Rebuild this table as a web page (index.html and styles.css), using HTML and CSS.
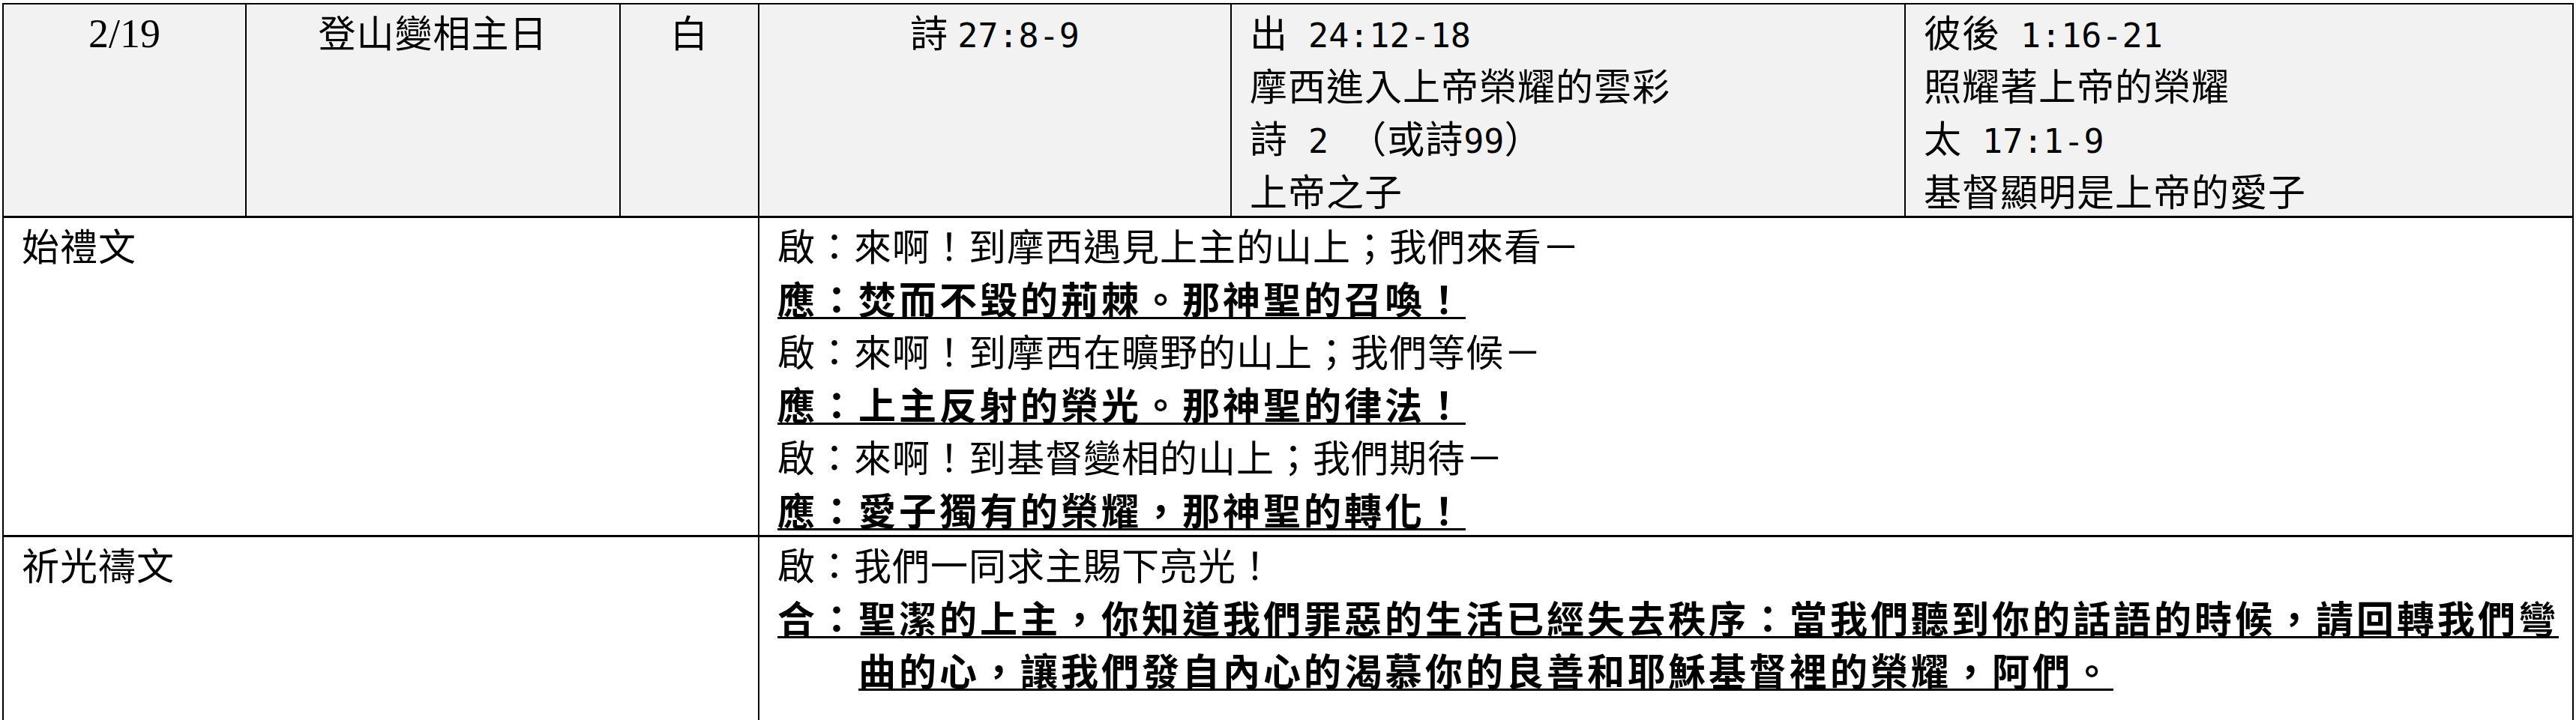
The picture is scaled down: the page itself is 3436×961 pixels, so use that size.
FILE: index.html
```html
<!DOCTYPE html>
<html lang="zh-Hant">
<head>
<meta charset="utf-8">
<title>登山變相主日</title>
<link rel="stylesheet" href="styles.css">
</head>
<body>
<div class="sheet">
  <div class="cell head center"><span class="date">2/19</span></div>
  <div class="cell head center">登山變相主日</div>
  <div class="cell head center">白</div>
  <div class="cell head center">詩 <span class="n">27:8-9</span></div>
  <div class="cell head pad">
    <p>出<span class="n"> 24:12-18</span></p>
    <p>摩西進入上帝榮耀的雲彩</p>
    <p>詩<span class="n"> 2 </span>（或詩<span class="n">99</span>）</p>
    <p>上帝之子</p>
  </div>
  <div class="cell head pad">
    <p>彼後<span class="n"> 1:16-21</span></p>
    <p>照耀著上帝的榮耀</p>
    <p>太<span class="n"> 17:1-9</span></p>
    <p>基督顯明是上帝的愛子</p>
  </div>

  <div class="cell body1 span3 pad">始禮文</div>
  <div class="cell body1 span3 pad">
    <p>啟：來啊！到摩西遇見上主的山上；我們來看－</p>
    <p><span class="b">應：焚而不毀的荊棘。那神聖的召喚！</span></p>
    <p>啟：來啊！到摩西在曠野的山上；我們等候－</p>
    <p><span class="b">應：上主反射的榮光。那神聖的律法！</span></p>
    <p>啟：來啊！到基督變相的山上；我們期待－</p>
    <p><span class="b">應：愛子獨有的榮耀，那神聖的轉化！</span></p>
  </div>

  <div class="cell body2 span3 pad">祈光禱文</div>
  <div class="cell body2 span3 pad">
    <p>啟：我們一同求主賜下亮光！</p>
    <p class="hang"><span class="b">合：聖潔的上主，你知道我們罪惡的生活已經失去秩序：當我們聽到你的話語的時候，請回轉我們彎曲的心，讓我們發自內心的渴慕你的良善和耶穌基督裡的榮耀，阿們。</span></p>
  </div>
</div>
</body>
</html>
```
FILE: styles.css
```css
html, body {
  margin: 0;
  padding: 0;
  background: #ffffff;
}

body {
  font-family: "Noto Sans CJK TC", "Noto Sans CJK SC", sans-serif;
  color: #000000;
}

.sheet {
  display: grid;
  grid-template-columns: 324px 499px 185px 630px 899px 891px;
  width: 3430px;
  box-sizing: border-box;
  margin: 4px 0 0 3px;
  border-left: 2px solid #000000;
  border-top: 2px solid #000000;
  font-size: 50px;
  line-height: 70.5px;
  letter-spacing: 1px;
  text-spacing-trim: space-all;
}

.sheet p {
  margin: 0;
  height: 70.5px;
}

.sheet p.hang {
  height: auto;
}

.cell {
  box-sizing: border-box;
  border-right: 2px solid #000000;
  border-bottom: 3px solid #000000;
  overflow: hidden;
}

.head {
  background: #f2f2f2;
  height: 285px;
}

.body1 {
  height: 426px;
}

.body2 {
  min-height: 300px;
}

.span3 {
  grid-column: span 3;
}

.center {
  text-align: center;
}

.pad {
  padding: 0 10px 0 24px;
}

.n {
  font-family: "DejaVu Sans Mono", "Liberation Mono", monospace;
  font-size: 45px;
  line-height: 1;
  letter-spacing: 0;
  white-space: pre;
}

.date {
  font-family: "Liberation Serif", serif;
  font-size: 54px;
  line-height: 1;
  letter-spacing: 0;
}

.b {
  font-weight: 700;
  letter-spacing: 4px;
  text-decoration: underline;
  text-decoration-thickness: 3px;
  text-underline-offset: 4px;
  text-decoration-skip-ink: none;
}

.hang {
  padding-left: 108px;
  text-indent: -108px;
}
```
